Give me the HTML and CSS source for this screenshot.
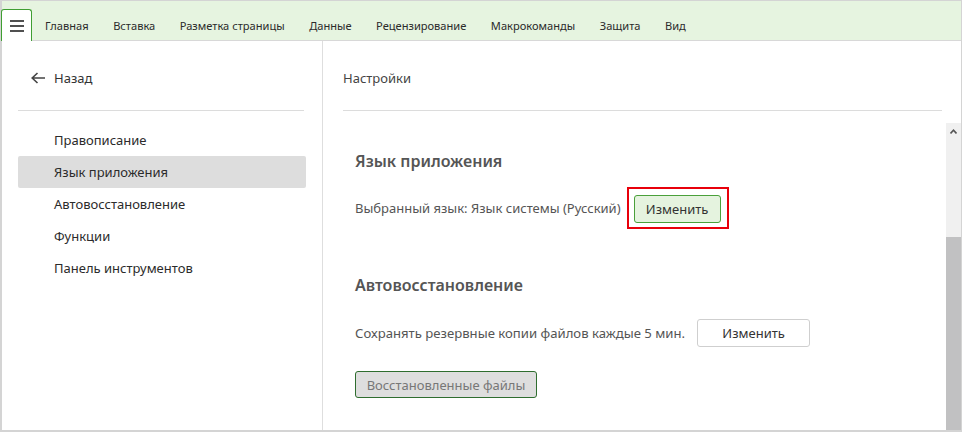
FILE: index.html
```html
<!DOCTYPE html>
<html lang="ru">
<head>
<meta charset="utf-8">
<link rel="stylesheet" href="styles.css">
</head>
<body>
<div class="window">
  <div class="toolbar">
    <div class="menu-btn">
      <svg width="14" height="12" viewBox="0 0 14 12"><rect x="0" y="0" width="14" height="2" fill="#505050"/><rect x="0" y="5" width="14" height="2" fill="#505050"/><rect x="0" y="10" width="14" height="2" fill="#505050"/></svg>
    </div>
    <nav class="tabs">
      <span class="tab">Главная</span>
      <span class="tab">Вставка</span>
      <span class="tab">Разметка страницы</span>
      <span class="tab">Данные</span>
      <span class="tab">Рецензирование</span>
      <span class="tab">Макрокоманды</span>
      <span class="tab">Защита</span>
      <span class="tab">Вид</span>
    </nav>
  </div>
  <div class="main">
    <aside class="sidebar">
      <div class="back">
        <svg width="14" height="12" viewBox="0 0 14 12"><path d="M6.5 1 L1.2 6 L6.5 11 M1.2 6 H14" fill="none" stroke="#444" stroke-width="1.6"/></svg>
        <span>Назад</span>
      </div>
      <div class="sep"></div>
      <ul class="nav">
        <li>Правописание</li>
        <li class="active">Язык приложения</li>
        <li>Автовосстановление</li>
        <li>Функции</li>
        <li>Панель инструментов</li>
      </ul>
    </aside>
    <section class="content">
      <div class="title">Настройки</div>
      <div class="sep2"></div>
      <div class="scroll">
        <div class="body">
          <h2 class="h">Язык приложения</h2>
          <div class="row">
            <span class="label">Выбранный язык: Язык системы (Русский)</span>
            <span class="highlight"><button class="btn green">Изменить</button></span>
          </div>
          <h2 class="h h2">Автовосстановление</h2>
          <div class="row row2">
            <span class="label">Сохранять резервные копии файлов каждые 5 мин.</span>
            <button class="btn white">Изменить</button>
          </div>
          <button class="btn restored">Восстановленные файлы</button>
        </div>
        <div class="scrollbar">
          <div class="track">
            <svg width="7" height="5" viewBox="0 0 7 5"><path d="M0.5 4.5 L3.5 1.2 L6.5 4.5" fill="none" stroke="#555" stroke-width="1.6"/></svg>
          </div>
          <div class="thumb"></div>
        </div>
      </div>
    </section>
  </div>
</div>
</body>
</html>
```
FILE: styles.css
```css
* { box-sizing: border-box; }
html, body { margin: 0; padding: 0; }
body {
  width: 962px; height: 432px; overflow: hidden;
  font-family: "Noto Sans", "Open Sans", sans-serif;
  font-size: 13px; color: #333; background: #fff;
}
.window {
  width: 962px; height: 432px;
  border: 1px solid #d4d4d4; border-left: 2px solid #d4d4d4; border-bottom: 2px solid #d4d4d4;
  display: flex; flex-direction: column;
}
.toolbar {
  height: 40px; flex: none;
  background: #e6f4e0;
  border-bottom: 1px solid #d8d8d8;
  display: flex; align-items: flex-end;
}
.menu-btn {
  width: 31px; height: 32px; margin-bottom: -1px; margin-left: -1px;
  background: #fff;
  border: 1px solid #3f9e32; border-bottom: none;
  border-radius: 3px 3px 0 0;
  display: flex; align-items: center; justify-content: center;
  padding-top: 1px;
}
.tabs {
  display: flex; height: 39px; align-items: center;
  margin-left: 13px; padding-top: 10px;
}
.tab { color: #2b2b2b; margin-right: 24.5px; white-space: nowrap; font-size: 11.1px; }
.main { flex: 1; display: flex; min-height: 0; }
.sidebar {
  width: 321px; flex: none;
  border-right: 1px solid #dedede;
  padding: 21px 16px 0 16px;
}
.back { height: 32px; display: flex; align-items: center; padding-left: 13px; gap: 9px; color: #333; }
.sep { height: 1px; background: #dcdcdc; margin: 16px 2px 13px 0; }
.nav { list-style: none; margin: 0; padding: 0; }
.nav li {
  height: 32px; display: flex; align-items: center;
  padding-left: 36px; color: #2b2b2b;
  border-radius: 2px;
}
.nav li.active { background: #dddddd; }
.content { flex: 1; display: flex; flex-direction: column; min-width: 0; }
.title { height: 32px; margin-top: 21px; display: flex; align-items: center; padding-left: 20px; color: #444; }
.sep2 { height: 1px; background: #dcdcdc; margin: 16px 19px 0 20px; }
.scroll { flex: 1; display: flex; margin-top: 12px; min-height: 0; }
.body { flex: 1; padding: 26px 0 0 32px; }
.h { margin: 0; font-size: 16px; font-weight: 600; color: #555; line-height: 24px; }
.row { display: flex; align-items: center; margin-top: 14px; }
.label { color: #555; white-space: nowrap; }
.row2 .label { font-size: 13.15px; }
.highlight {
  margin-left: 6px;
  border: 2px solid #e8000b;
  padding: 6px 6px 4px 5px;
  display: inline-flex;
}
.btn {
  font-family: inherit; font-size: 13px; color: #333;
  height: 28px; border-radius: 3px; padding: 0; cursor: default;
}
.green { width: 87px; background: #e5f3df; border: 1px solid #4aa03a; }
.h2 { margin-top: 44px; }
.row2 { margin-top: 22px; height: 28px; }
.white { width: 113px; margin-left: 12px; background: #fff; border: 1px solid #cfcfcf; }
.restored { display: block; margin-top: 24px; width: 182px; height: 27px; background: #dedede; border: 1px solid #2f6d2f; color: #777; }
.scrollbar { width: 15px; flex: none; display: flex; flex-direction: column; }
.track { height: 114px; background: #f0f0f0; display: flex; justify-content: center; padding-top: 6px; }
.thumb { flex: 1; background: #c1c1c2; }
```
